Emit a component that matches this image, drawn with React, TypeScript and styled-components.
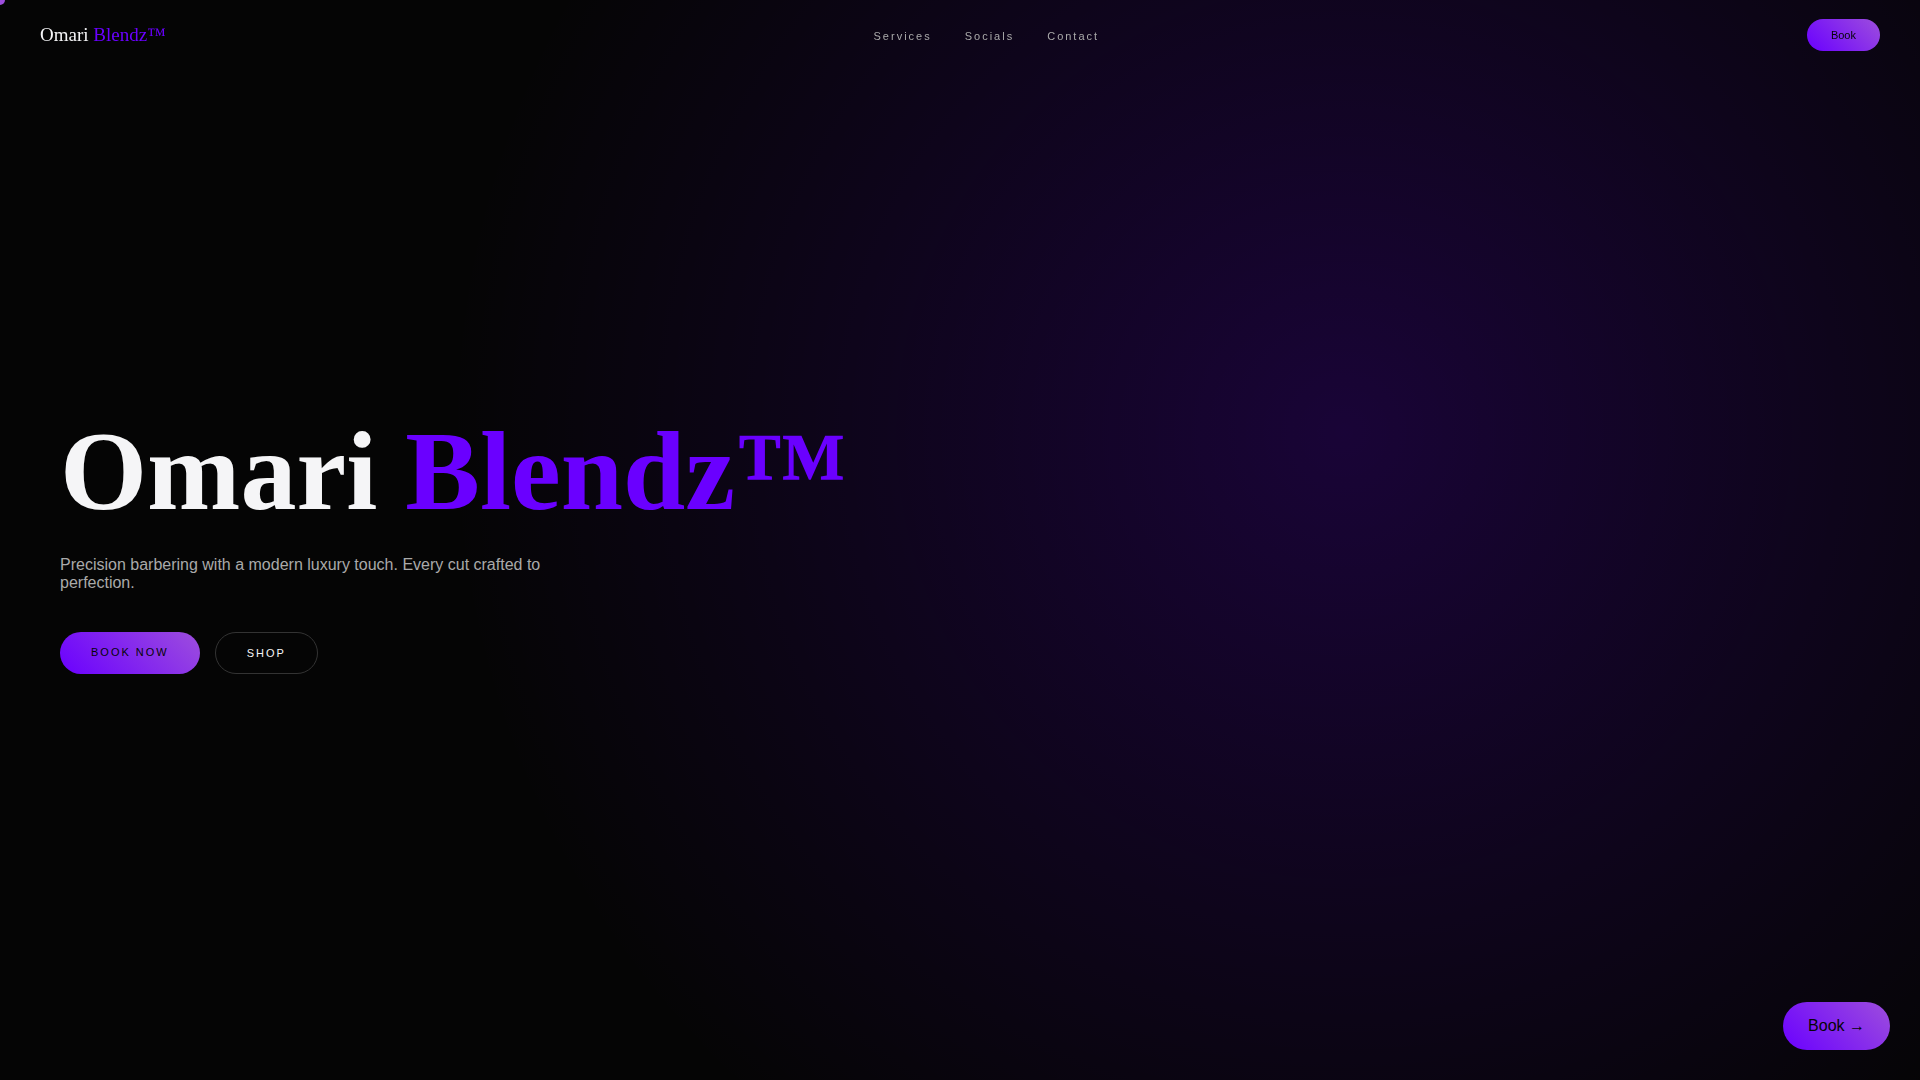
import React from "react";
import styled, { createGlobalStyle } from "styled-components";

const violet = "#6a00ff";
const accent = "linear-gradient(45deg, #6a00ff, #9d4edd)";
const sans = '"Liberation Sans", Arial, sans-serif';
const serif = '"Liberation Serif", "Times New Roman", serif';

const GlobalStyle = createGlobalStyle`
  * {
    box-sizing: border-box;
    margin: 0;
    padding: 0;
  }

  body {
    background: #050505;
    color: #f5f5f7;
    font-family: ${sans};
    overflow-x: hidden;
  }

  a {
    color: inherit;
    text-decoration: none;
  }
`;

const CursorDot = styled.div`
  position: fixed;
  top: 0;
  left: 0;
  z-index: 20;
  width: 10px;
  height: 10px;
  border-radius: 50%;
  background: #9d4edd;
  transform: translate(-50%, -50%);
  pointer-events: none;
`;

const Header = styled.header`
  position: fixed;
  top: 0;
  left: 0;
  z-index: 10;
  display: flex;
  align-items: center;
  justify-content: space-between;
  width: 100%;
  padding: 19px 40px;
`;

const Logo = styled.a`
  font-family: ${serif};
  font-size: 19px;
`;

const Violet = styled.span`
  color: ${violet};
`;

const NavLinks = styled.ul`
  display: flex;
  gap: 33px;
  list-style: none;
`;

const NavLink = styled.a`
  color: #aaa;
  font-size: 11px;
  letter-spacing: 2px;
`;

const Pill = styled.button<{ $size: "small" | "large" }>`
  padding: ${(p) => (p.$size === "large" ? "15px 25px" : "10px 24px")};
  border: 0;
  border-radius: 30px;
  background: ${accent};
  color: #050505;
  font-family: ${sans};
  font-size: ${(p) => (p.$size === "large" ? "16px" : "11px")};
  cursor: pointer;
`;

const FloatingSlot = styled.div`
  position: fixed;
  right: 30px;
  bottom: 30px;
  z-index: 10;
  display: flex;
`;

const Hero = styled.main`
  display: flex;
  flex-direction: column;
  align-items: flex-start;
  justify-content: center;
  min-height: 100vh;
  padding: 0 60px;
  background: radial-gradient(circle at 70% 40%, rgba(106, 0, 255, 0.2), transparent 60%);
`;

const Title = styled.h1`
  font-family: ${serif};
  font-size: 112px;
  font-weight: 700;
`;

const Tagline = styled.p`
  max-width: 500px;
  margin-top: 20px;
  color: #aaa;
  font-size: 16px;
`;

const Actions = styled.div`
  display: flex;
  gap: 15px;
  margin-top: 40px;
`;

const Action = styled.a<{ $outlined?: boolean }>`
  padding: 14px 31px;
  border: ${(p) => (p.$outlined ? "1px solid #333" : "0")};
  border-radius: 30px;
  background: ${(p) => (p.$outlined ? "transparent" : accent)};
  color: ${(p) => (p.$outlined ? "#f5f5f7" : "#050505")};
  font-size: 11px;
  letter-spacing: 2px;
  text-transform: uppercase;
`;

export default function App() {
  return (
    <>
      <GlobalStyle />
      <CursorDot />
      <Header>
        <Logo href="#home">
          Omari <Violet>Blendz™</Violet>
        </Logo>
        <nav>
          <NavLinks>
            <li>
              <NavLink href="#services">Services</NavLink>
            </li>
            <li>
              <NavLink href="#socials">Socials</NavLink>
            </li>
            <li>
              <NavLink href="#contact">Contact</NavLink>
            </li>
          </NavLinks>
        </nav>
        <Pill $size="small">Book</Pill>
      </Header>
      <Hero id="home">
        <Title>
          Omari <Violet>Blendz™</Violet>
        </Title>
        <Tagline>
          Precision barbering with a modern luxury touch. Every cut crafted to perfection.
        </Tagline>
        <Actions>
          <Action href="#book">Book Now</Action>
          <Action href="#shop" $outlined>
            Shop
          </Action>
        </Actions>
      </Hero>
      <FloatingSlot>
        <Pill $size="large">Book →</Pill>
      </FloatingSlot>
    </>
  );
}
